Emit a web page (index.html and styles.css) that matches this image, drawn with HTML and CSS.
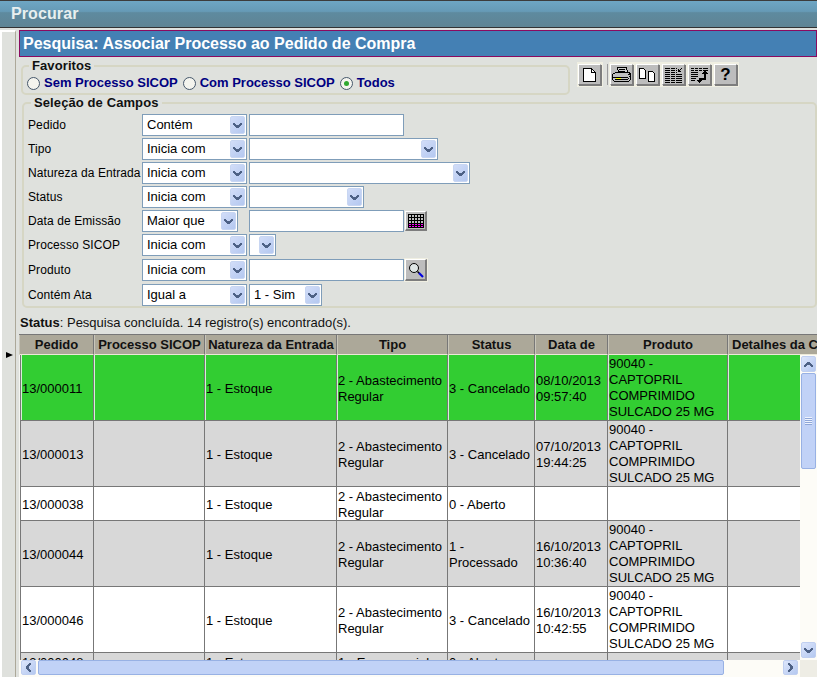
FILE: index.html
```html
<!DOCTYPE html>
<html lang="pt-BR">
<head>
<meta charset="utf-8">
<title>Procurar</title>
<link rel="stylesheet" href="styles.css">
</head>
<body>
<svg class="defs" width="0" height="0">
  <symbol id="chev" viewBox="0 0 11 7"><path d="M1 1h2v1h1v1h3V2h1V1h2v2H9v1H8v1H7v1H4V5H3V4H2V3H1z" fill="#4d6185"/></symbol>
</svg>
<header class="topbar">Procurar</header>
<div class="main">
  <aside class="side"><span class="side-arrow"></span></aside>
  <div class="content">
    <h1 class="title">Pesquisa: Associar Processo ao Pedido de Compra</h1>
    <div class="fav-row">
      <fieldset class="fav">
        <legend>Favoritos</legend>
        <div class="radios">
          <label class="radio"><input type="radio" name="f"><span>Sem Processo SICOP</span></label>
          <label class="radio"><input type="radio" name="f"><span>Com Processo SICOP</span></label>
          <label class="radio"><input type="radio" name="f" checked><span>Todos</span></label>
        </div>
      </fieldset>
      <div class="toolbar">
        <span class="tool"><span class="btn"><svg width="21" height="18" viewBox="0 0 21 18" shape-rendering="crispEdges"><path d="M4.500 2.500h8l4 4v9h-12z" fill="#fff" stroke="#000"/><path d="M12.500 2.500v4h4" fill="none" stroke="#000"/></svg></span></span>
        <span class="tool-sep"></span>
        <span class="tool"><span class="btn"><svg width="21" height="18" viewBox="0 0 21 18" shape-rendering="crispEdges"><path d="M6.500 1.500h9l1 5h-9z" fill="#ccc" stroke="#000"/><path d="M1.500 8.500l3-2h14l1 2v5l-2 2h-14l-2-2z" fill="#c0c0c0" stroke="#000"/><path d="M2 11h15M4 13h13M8 3h6M8 5h6" stroke="#000"/><path d="M5 12h5v1H5z" fill="#ff0"/><path d="M17 8h2v1h-2zM18 10h1v1h-1zM17 12h1v1h-1z" fill="#000"/></svg></span></span>
        <span class="tool"><span class="btn"><svg width="21" height="18" viewBox="0 0 21 18" shape-rendering="crispEdges"><path d="M2.500 2.500h4l2 2v8h-6z" fill="#fff" stroke="#000"/><path d="M11.500 5.500h4l2 2v8h-6z" fill="#fff" stroke="#000"/></svg></span></span>
        <span class="tool"><span class="btn"><svg width="21" height="18" viewBox="0 0 21 18" shape-rendering="crispEdges"><path d="M2 2h12v1H2zM2 4h12v1H2zM2 6h12v1H2zM2 8h17v1H2zM2 10h17v1H2zM2 12h17v1H2zM2 14h17v1H2zM2 16h17v1H2z" fill="#000"/><path d="M15 5h3v1h-3zM15 3h1v2h-1zM16 4h1v1h-1zM17 3h1v1h-1zM18 2h1v1h-1z" fill="#000"/><path d="M7 2h1v15H7zM12 2h1v15h-1z" fill="#bdbdbd"/></svg></span></span>
        <span class="tool"><span class="btn"><svg width="21" height="18" viewBox="0 0 21 18" shape-rendering="crispEdges"><path d="M2 2h3v1H2zM6 2h3v1H6zM10 2h3v1h-3zM14 2h5v1h-5zM2 4h3v1H2zM6 4h3v1H6zM10 4h3v1h-3zM14 4h5v1h-5zM2 6h7v1H2zM2 8h7v1H2zM2 10h7v1H2zM2 12h5v1H2zM2 14h4v1H2z" fill="#000"/><path d="M15 8h2v6h-6v2h-1v-4h5z" fill="#000"/><path d="M13 8h6V7h-1V6h-1V5h-2v1h-1v1h-1zM8 14h5v1h-1v1h-1v1H10v-1H9v-1H8z" fill="#000"/></svg></span></span>
        <span class="tool"><span class="btn help">?</span></span>
      </div>
    </div>
    <fieldset class="fields">
      <legend>Seleção de Campos</legend>
      <div class="row">
        <span class="lbl">Pedido</span>
        <span class="sel op"><span class="sel-t">Contém</span><span class="arr"><svg width="11" height="7"><use href="#chev"/></svg></span></span>
        <input class="txt" type="text">
      </div>
      <div class="row">
        <span class="lbl">Tipo</span>
        <span class="sel op"><span class="sel-t">Inicia com</span><span class="arr"><svg width="11" height="7"><use href="#chev"/></svg></span></span>
        <span class="sel w-tipo"><span class="sel-t"></span><span class="arr"><svg width="11" height="7"><use href="#chev"/></svg></span></span>
      </div>
      <div class="row">
        <span class="lbl">Natureza da Entrada</span>
        <span class="sel op"><span class="sel-t">Inicia com</span><span class="arr"><svg width="11" height="7"><use href="#chev"/></svg></span></span>
        <span class="sel w-nat"><span class="sel-t"></span><span class="arr"><svg width="11" height="7"><use href="#chev"/></svg></span></span>
      </div>
      <div class="row">
        <span class="lbl">Status</span>
        <span class="sel op"><span class="sel-t">Inicia com</span><span class="arr"><svg width="11" height="7"><use href="#chev"/></svg></span></span>
        <span class="sel w-status"><span class="sel-t"></span><span class="arr"><svg width="11" height="7"><use href="#chev"/></svg></span></span>
      </div>
      <div class="row">
        <span class="lbl">Data de Emissão</span>
        <span class="sel op op-short"><span class="sel-t">Maior que</span><span class="arr"><svg width="11" height="7"><use href="#chev"/></svg></span></span>
        <input class="txt" type="text">
        <span class="icon-btn"><svg width="16" height="14" viewBox="0 0 16 14" shape-rendering="crispEdges"><path d="M0 0h16v14H0z" fill="#000"/><path d="M1 1h2v2H1zM4 1h2v2H4zM7 1h2v2H7zM10 1h2v2h-2zM13 1h2v2h-2zM1 4h2v2H1zM4 4h2v2H4zM7 4h2v2H7zM10 4h2v2h-2zM13 4h2v2h-2zM1 7h2v2H1zM4 7h2v2H4zM7 7h2v2H7zM10 7h2v2h-2zM13 7h2v2h-2z" fill="#c0c0c0"/><path d="M1 10h2v1H1zM4 10h2v1H4zM7 10h2v1H7zM10 10h2v1h-2zM13 10h2v1h-2zM1 12h2v1H1zM4 12h2v1H4zM7 12h2v1H7zM10 12h2v1h-2zM13 12h2v1h-2z" fill="#f0f"/></svg></span>
      </div>
      <div class="row row-tall">
        <span class="lbl">Processo SICOP</span>
        <span class="sel op"><span class="sel-t">Inicia com</span><span class="arr"><svg width="11" height="7"><use href="#chev"/></svg></span></span>
        <span class="sel w-proc"><span class="sel-t"></span><span class="arr"><svg width="11" height="7"><use href="#chev"/></svg></span></span>
      </div>
      <div class="row row-tall">
        <span class="lbl">Produto</span>
        <span class="sel op"><span class="sel-t">Inicia com</span><span class="arr"><svg width="11" height="7"><use href="#chev"/></svg></span></span>
        <input class="txt" type="text">
        <span class="icon-btn icon-halo"><svg width="18" height="16" viewBox="0 0 18 16"><circle cx="7" cy="6" r="4.500" fill="#dfe6e6" stroke="#000"/><path d="M10.500 9.500l2 2" stroke="#000" stroke-width="1.500"/><path d="M12 11l4 4" stroke="#0000e0" stroke-width="2.200"/></svg></span>
      </div>
      <div class="row">
        <span class="lbl">Contém Ata</span>
        <span class="sel op"><span class="sel-t">Igual a</span><span class="arr"><svg width="11" height="7"><use href="#chev"/></svg></span></span>
        <span class="sel w-ata"><span class="sel-t">1 - Sim</span><span class="arr"><svg width="11" height="7"><use href="#chev"/></svg></span></span>
      </div>
    </fieldset>
    <p class="status"><b>Status</b>: Pesquisa concluída. 14 registro(s) encontrado(s).</p>
    <section class="grid">
      <div class="grid-head">
        <table class="tbl head-tbl">
          <colgroup><col class="c1h"><col class="c2"><col class="c3"><col class="c4"><col class="c5"><col class="c6"><col class="c7"><col class="c8"></colgroup>
          <tr><th>Pedido</th><th>Processo SICOP</th><th>Natureza da Entrada</th><th>Tipo</th><th>Status</th><th>Data de</th><th>Produto</th><th>Detalhes da Compra</th></tr>
        </table>
      </div>
      <div class="grid-body">
        <table class="tbl body-tbl">
          <colgroup><col class="c1"><col class="c2"><col class="c3"><col class="c4"><col class="c5"><col class="c6"><col class="c7"><col class="c8"></colgroup>
          <tr class="r-green"><td>13/000011</td><td></td><td>1 - Estoque</td><td>2 - Abastecimento Regular</td><td>3 - Cancelado</td><td>08/10/2013 09:57:40</td><td class="prod">90040 -<br>CAPTOPRIL<br>COMPRIMIDO<br>SULCADO 25 MG</td><td></td></tr>
          <tr class="r-grey"><td>13/000013</td><td></td><td>1 - Estoque</td><td>2 - Abastecimento Regular</td><td>3 - Cancelado</td><td>07/10/2013 19:44:25</td><td class="prod">90040 -<br>CAPTOPRIL<br>COMPRIMIDO<br>SULCADO 25 MG</td><td></td></tr>
          <tr><td>13/000038</td><td></td><td>1 - Estoque</td><td>2 - Abastecimento Regular</td><td>0 - Aberto</td><td></td><td></td><td></td></tr>
          <tr class="r-grey"><td>13/000044</td><td></td><td>1 - Estoque</td><td>2 - Abastecimento Regular</td><td>1 -<br>Processado</td><td>16/10/2013 10:36:40</td><td class="prod">90040 -<br>CAPTOPRIL<br>COMPRIMIDO<br>SULCADO 25 MG</td><td></td></tr>
          <tr><td>13/000046</td><td></td><td>1 - Estoque</td><td>2 - Abastecimento Regular</td><td>3 - Cancelado</td><td>16/10/2013 10:42:55</td><td class="prod">90040 -<br>CAPTOPRIL<br>COMPRIMIDO<br>SULCADO 25 MG</td><td></td></tr>
          <tr class="r-grey"><td>13/000048</td><td></td><td>1 - Estoque</td><td>1 - Emergencial</td><td>0 - Aberto</td><td></td><td></td><td></td></tr>
        </table>
      </div>
      <div class="vbar">
        <span class="sb-btn"><svg class="flip" width="11" height="7"><use href="#chev"/></svg></span>
        <span class="sb-thumb-v"><span class="grip"></span></span>
        <span class="sb-fill"></span>
        <span class="sb-btn"><svg width="11" height="7"><use href="#chev"/></svg></span>
      </div>
      <div class="hbar">
        <span class="sb-btn"><svg class="rot-l" width="11" height="7"><use href="#chev"/></svg></span>
        <span class="sb-thumb-h"></span>
        <span class="sb-fill"></span>
        <span class="sb-btn"><svg class="rot-r" width="11" height="7"><use href="#chev"/></svg></span>
      </div>
      <div class="corner"></div>
    </section>
  </div>
</div>
</body>
</html>
```

FILE: styles.css
```css
* { box-sizing: border-box; }
html, body { margin: 0; height: 677px; overflow: hidden; }
body {
  background: #dfe1dd;
  color: #000;
  font: 12px/16px "Liberation Sans", Arial, sans-serif;
  display: flex;
  flex-direction: column;
}
.defs { position: absolute; }
.topbar {
  height: 28px;
  flex: none;
  padding-left: 11px;
  background: linear-gradient(#6ea6c4 0, #669ab6 40%, #5e8a9f 45%, #5f8494 100%);
  border-top: 1px solid #3c3c3c;
  border-bottom: 1px solid #333;
  color: #e8efef;
  font-size: 16px;
  font-weight: bold;
  line-height: 26px;
  letter-spacing: .1px;
}
.main { flex: 1; min-height: 0; display: flex; margin-top: 2px; }
.side {
  width: 16px;
  flex: none;
  border-left: 2px solid #fff;
  border-top: 2px solid #fff;
  border-right: 1px solid #aca899;
  display: flex;
  align-items: center;
  justify-content: center;
}
.side-arrow {
  margin: 0 0 0 2px;
  border-left: 7px solid #000;
  border-top: 3.500px solid transparent;
  border-bottom: 3.500px solid transparent;
}
.content { flex: 1; min-width: 0; margin-left: 3px; display: flex; flex-direction: column; }
.title {
  margin: 0;
  height: 27px;
  flex: none;
  background: #4480b4;
  border: 1px solid #8b0a5f;
  color: #fff;
  font-size: 16px;
  font-weight: bold;
  line-height: 25px;
  padding-left: 3px;
}
.fav-row { display: flex; align-items: flex-start; flex: none; margin-top: 2px; }
fieldset { margin: 0; border: 2px solid #d6d6c4; border-radius: 5px; min-width: 0; }
legend { font-size: 13px; font-weight: bold; line-height: 14px; padding: 0 3px; color: #111; letter-spacing: .1px; }
.fav { width: 549px; height: 36px; margin-left: 2px; padding: 0 0 0 4px; }
.fav legend { margin-left: 2px; }
.radios { display: flex; gap: 5px; margin-top: 3px; }
.radio { display: flex; align-items: center; gap: 4px; color: #000080; font-weight: bold; font-size: 13px; line-height: 14px; }
.radio input {
  appearance: none;
  width: 13px;
  height: 13px;
  margin: 0;
  border: 1px solid #46586b;
  border-radius: 50%;
  background: #f4f4ee;
  display: grid;
  place-items: center;
}
.radio input:checked::after { content: ""; width: 5px; height: 5px; border-radius: 50%; background: #2fa82f; }
.toolbar { display: flex; margin: 3px 0 0 7px; }
.tool { background: #f0efe2; padding: 2px 2px 2px 1px; display: flex; }
.tool-sep { width: 5px; border-left: 2px solid transparent; border-right: 1px solid #9a9a9a; background: #dfe1dd; margin: 2px 1px 0 0; height: 21px; }
.btn {
  width: 23px;
  height: 21px;
  background: #bdbdbd;
  border-top: 1px solid #fff;
  border-left: 1px solid #fff;
  border-right: 1px solid #7d7d7d;
  border-bottom: 1px solid #7d7d7d;
  box-shadow: 1px 1px 0 #7d7d7d;
  display: flex;
  align-items: center;
  justify-content: center;
  overflow: hidden;
}
.help { font-size: 17px; font-weight: bold; line-height: 18px; }
.fields { margin: 1px 0 0 3px; height: 212px; padding: 4px 0 0 4px; }
.fields legend { margin-left: 3px; }
.row { display: flex; align-items: flex-start; height: 24px; }
.row-tall { height: 25px; }
.lbl { width: 114px; flex: none; line-height: 22px; white-space: nowrap; letter-spacing: .1px; }
.sel {
  height: 22px;
  background: #fff;
  border: 1px solid #7f9db9;
  display: flex;
  align-items: center;
  padding: 0 1px 0 4px;
  margin-right: 2px;
  flex: none;
  font-size: 13px;
}
.sel-t { flex: 1; min-width: 0; white-space: nowrap; overflow: hidden; }
.arr {
  width: 15px;
  height: 18px;
  flex: none;
  background: linear-gradient(135deg, #d2ddf8, #b4c8f0);
  border: 1px solid #c8d6f2;
  border-radius: 2px;
  display: flex;
  align-items: center;
  justify-content: center;
}
.op { width: 105px; }
.op-short { width: 96px; margin-right: 11px; }
.w-tipo { width: 189px; }
.w-nat { width: 221px; }
.w-status { width: 115px; }
.w-proc { width: 27px; }
.w-ata { width: 73px; }
.txt { width: 155px; height: 22px; margin: 0; padding: 0 4px; background: #fff; border: 1px solid #7f9db9; outline: none; flex: none; }
.icon-btn {
  width: 22px;
  height: 20px;
  margin: 1px 0 0 1px;
  background: #bdbdbd;
  border-top: 1px solid #fff;
  border-left: 1px solid #fff;
  border-right: 2px solid #7d7d7d;
  border-bottom: 2px solid #7d7d7d;
  display: flex;
  align-items: center;
  justify-content: center;
  flex: none;
}
.icon-halo { height: 22px; margin-top: 0; box-shadow: 0 0 0 1px #f0efe2; }
.status { margin: 8px 0 4px 1px; font-size: 13px; line-height: 14px; flex: none; height: 14px; color: #111; }
.grid {
  flex: 1;
  min-height: 0;
  display: grid;
  grid-template-columns: 781px 17px;
  grid-template-rows: 21px 305px 17px;
}
.grid-head { grid-column: 1 / 3; overflow: hidden; border-top: 1px solid #777; }
.grid-body { overflow: hidden; padding-left: 1px; background: #f4f4f0; }
.tbl { border-collapse: separate; border-spacing: 0; table-layout: fixed; width: 829px; }
.body-tbl { width: 828px; }
.c1h { width: 75px; }
.c1 { width: 74px; }
.c2 { width: 111px; }
.c3 { width: 132px; }
.c4 { width: 111px; }
.c5 { width: 87px; }
.c6 { width: 73px; }
.c7 { width: 120px; }
.c8 { width: 120px; }
th {
  height: 20px;
  padding: 1px 0 0;
  background: #aca899;
  border-right: 1px solid #777;
  border-left: 1px solid #c9c6ba;
  border-bottom: 1px solid #ece9d8;
  font-size: 13px;
  font-weight: bold;
  line-height: 18px;
  text-align: center;
  white-space: nowrap;
  overflow: hidden;
  color: #111;
}
th:last-child { overflow: visible; text-align: left; padding-left: 3px; }
td {
  padding: 2px 0 0 1px;
  border-right: 1px solid #777;
  box-shadow: inset 0 -1px 0 #777;
  font-size: 13px;
  line-height: 16px;
  background: #fff;
  vertical-align: middle;
  color: #000;
}
td.prod { padding: 1px 0 1px 1px; }
td:first-child { border-left: 1px solid #777; }
.r-green td { background: #32cd32; box-shadow: inset 0 -1px 0 #777, inset 1px 0 0 #d8f0d8; }
.r-grey td { background: #d8d8d8; }
.vbar, .hbar { display: flex; background: #fdfcf7; }
.vbar { flex-direction: column; padding: 1px 1px 2px 1px; grid-column: 2; grid-row: 2; }
.hbar { padding: 0 2px 2px 2px; grid-column: 1; grid-row: 3; }
.corner { grid-column: 2; grid-row: 3; background: #eeede5; }
.sb-btn {
  width: 15px;
  height: 16px;
  flex: none;
  background: linear-gradient(135deg, #dde6fb, #b4c8f0);
  border: 1px solid #c0cff0;
  border-radius: 2px;
  display: flex;
  align-items: center;
  justify-content: center;
}
.hbar .sb-btn { height: 15px; }
.sb-thumb-v {
  width: 15px;
  height: 96px;
  margin-top: 1px;
  flex: none;
  background: #c1d2f7;
  border: 1px solid #98b1e4;
  border-radius: 2px;
  display: flex;
  align-items: center;
  justify-content: center;
}
.sb-thumb-h {
  width: 686px;
  height: 15px;
  margin-left: 2px;
  flex: none;
  background: #c1d2f7;
  border: 1px solid #98b1e4;
  border-radius: 2px;
}
.grip { width: 7px; height: 8px; background: repeating-linear-gradient(#eef3fe 0 1px, #8ea6d8 1px 2px); }
.sb-fill { flex: 1; }
.flip { transform: rotate(180deg); }
.rot-l { transform: rotate(90deg); }
.rot-r { transform: rotate(-90deg); }
```
